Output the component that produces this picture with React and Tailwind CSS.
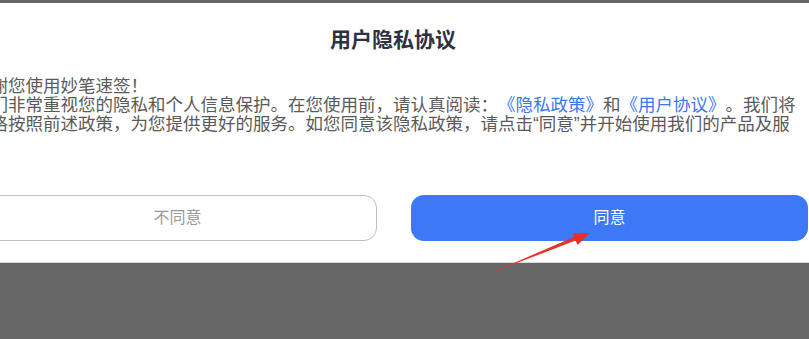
export default function App() {
  return (
    <div className="relative w-[809px] h-[339px] overflow-hidden bg-[#666666] font-['Liberation_Sans','Noto_Sans_CJK_SC',sans-serif]">
      <div className="mt-[3px] h-[260px] bg-white border-b border-[#d9d9d9] overflow-hidden">
        <div className="-ml-[27px] w-[840px]">
          <h1 className="mt-[23px] text-center text-[21px] leading-[28px] font-bold text-[#2e3142]">用户隐私协议</h1>
          <div className="mt-[23px] w-[832px] h-[57px] overflow-hidden text-[17.5px] leading-[19px] text-[#5a5a5a] [text-spacing-trim:space-all]">
            <p>感谢您使用妙笔速签！</p>
            <p>
              我们非常重视您的隐私和个人信息保护。在您使用前，请认真阅读：
              <span className="text-[#3a78ee]">《隐私政策》</span>和
              <span className="text-[#3a78ee]">《用户协议》</span>。我们将严格按照前述政策，为您提供更好的服务。如您同意该隐私政策，请点击“同意”并开始使用我们的产品及服务。
            </p>
          </div>
          <div className="mt-[61px] px-[5px] flex gap-[34px]">
            <button className="flex-1 h-[46px] rounded-[13px] border border-[#bdbdbd] bg-white text-[16px] text-[#9a9a9a]">不同意</button>
            <button className="flex-1 h-[46px] rounded-[13px] bg-[#3d78f6] text-[16px] text-white">同意</button>
          </div>
        </div>
      </div>
      <svg className="absolute left-0 top-0 pointer-events-none" width="809" height="339" viewBox="0 0 809 339">
        <polygon
          points="488,274 575.6,240.6 577.6,245 590,233 572.6,233.2 574.6,236.8"
          fill="#e8302a"
        />
      </svg>
    </div>
  );
}
